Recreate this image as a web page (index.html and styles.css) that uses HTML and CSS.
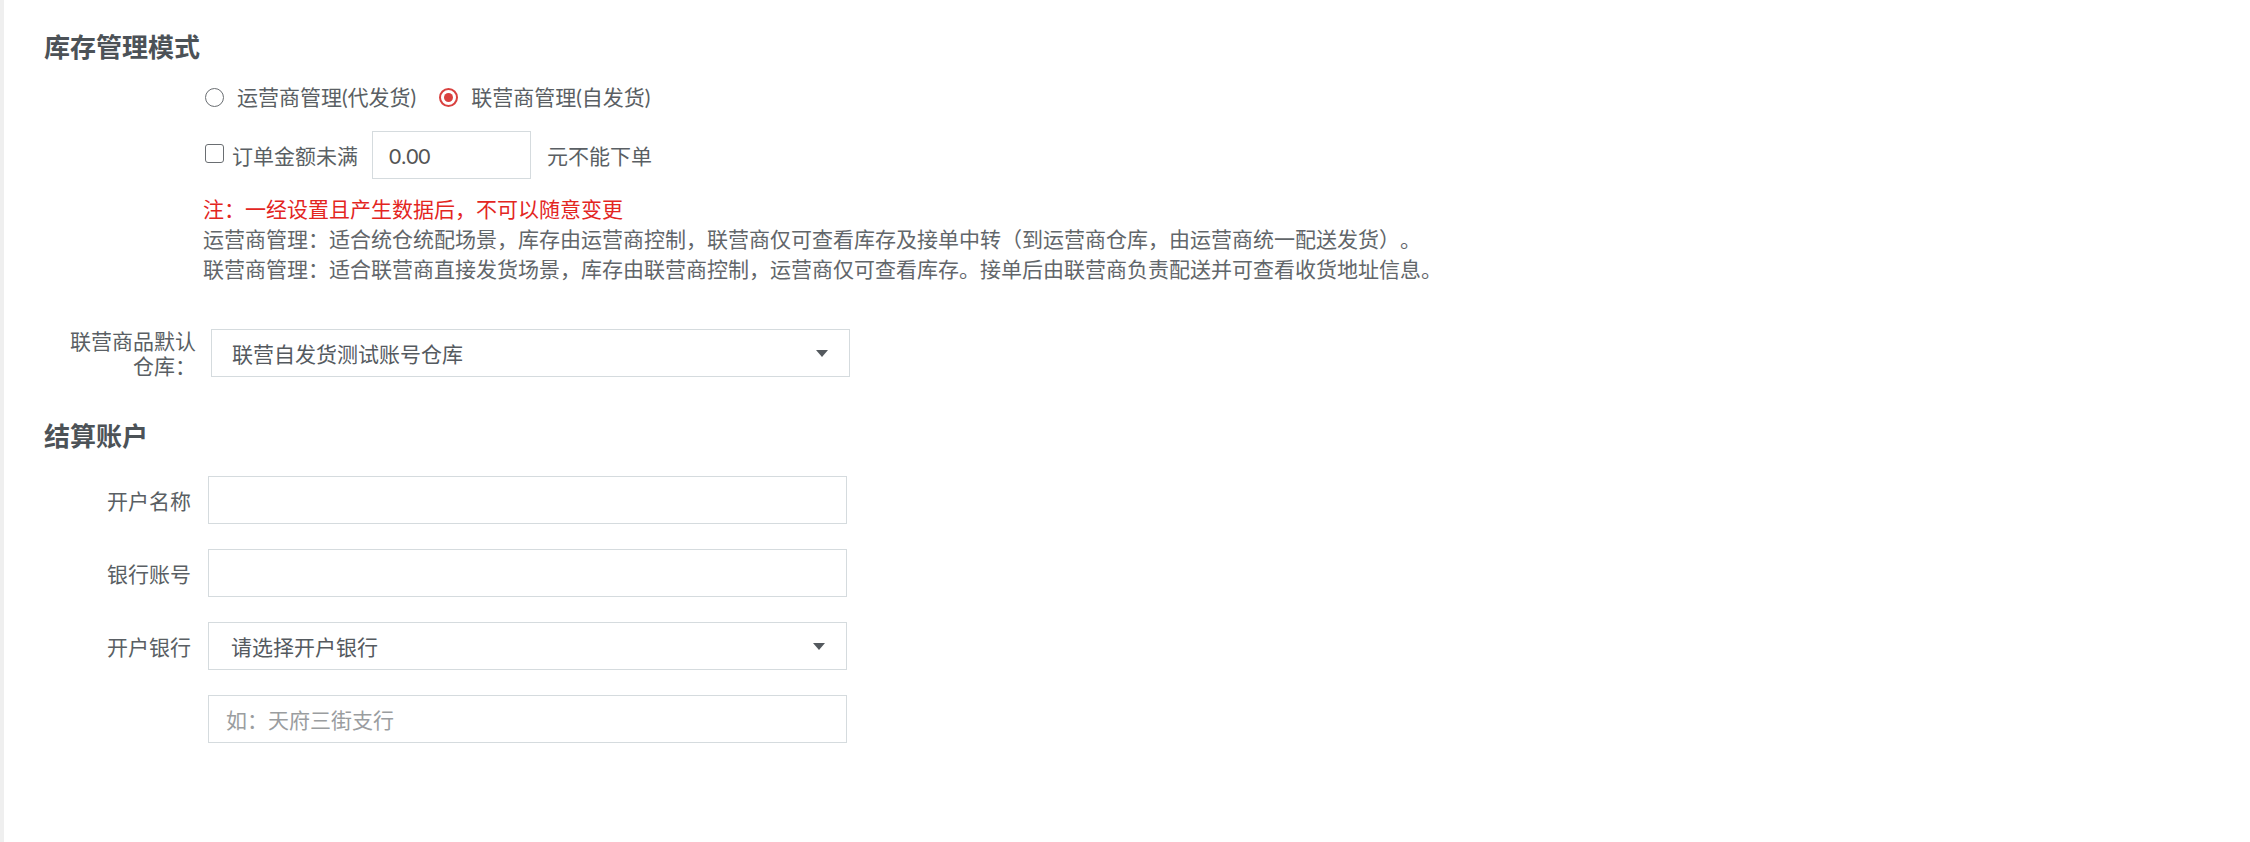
FILE: index.html
```html
<!DOCTYPE html>
<html lang="zh-CN">
  <head>
    <meta charset="UTF-8" />
    <meta name="viewport" content="width=device-width, initial-scale=1.0" />
    <title>库存管理模式</title>
    <link rel="stylesheet" href="styles.css">
  </head>
  <body>
    <div class="page">
      <h2 class="section-title">库存管理模式</h2>

      <div class="mode">
        <div class="radio-group">
          <label class="option"><span class="radio"></span>运营商管理(代发货)</label>
          <label class="option"><span class="radio checked"></span>联营商管理(自发货)</label>
        </div>

        <div class="min-order">
          <label class="option"><span class="checkbox"></span>订单金额未满</label>
          <input type="text" class="amount" value="0.00" />
          <span>元不能下单</span>
        </div>

        <div class="notes">
          <p class="warn">注：一经设置且产生数据后，不可以随意变更</p>
          <p>运营商管理：适合统仓统配场景，库存由运营商控制，联营商仅可查看库存及接单中转（到运营商仓库，由运营商统一配送发货）。</p>
          <p>联营商管理：适合联营商直接发货场景，库存由联营商控制，运营商仅可查看库存。接单后由联营商负责配送并可查看收货地址信息。</p>
        </div>
      </div>

      <div class="form-row warehouse">
        <label class="form-label">联营商品默认仓库：</label>
        <div class="select">联营自发货测试账号仓库<span class="caret"></span></div>
      </div>

      <h2 class="section-title account-title">结算账户</h2>

      <div class="account">
        <div class="form-row">
          <label class="form-label" for="acc-name">开户名称</label>
          <input type="text" class="field" id="acc-name" />
        </div>
        <div class="form-row">
          <label class="form-label" for="acc-no">银行账号</label>
          <input type="text" class="field" id="acc-no" />
        </div>
        <div class="form-row">
          <label class="form-label">开户银行</label>
          <div class="select">请选择开户银行<span class="caret"></span></div>
        </div>
        <div class="form-row">
          <span class="form-label"></span>
          <input type="text" class="field" placeholder="如：天府三街支行" />
        </div>
      </div>
    </div>
  </body>
</html>
```

FILE: styles.css
```css
body {
  margin: 0;
  font-family: Lato, "Noto Sans CJK SC", sans-serif;
  font-size: 21px;
  color: #5a5f64;
  background-color: #fff;
  text-spacing-trim: space-all;
}

.page {
  min-height: 842px;
  box-sizing: border-box;
  border-left: 4px solid #efefef;
  padding: 29px 0 0 40px;
}

.section-title {
  margin: 0;
  font-size: 26px;
  line-height: 36px;
  font-weight: bold;
  color: #4c5257;
}

/* inventory mode */
.mode {
  margin-left: 159px;
}

.option {
  display: inline-flex;
  align-items: center;
  gap: 13px;
}

.radio-group {
  display: flex;
  align-items: center;
  margin-top: 17px;
  line-height: 30px;
}

.radio-group .option + .option {
  margin-left: 21px;
}

.radio {
  width: 19px;
  height: 19px;
  margin-left: 2px;
  border: 1px solid #6a6e72;
  border-radius: 50%;
  box-sizing: border-box;
  display: flex;
  align-items: center;
  justify-content: center;
}

.radio.checked {
  border: 2px solid #d9413f;
}

.radio.checked::after {
  content: "";
  width: 9px;
  height: 9px;
  border-radius: 50%;
  background-color: #d9413f;
}

.min-order {
  display: flex;
  align-items: center;
  margin-top: 19px;
}

.min-order .option {
  gap: 8px;
}

.checkbox {
  width: 19px;
  height: 19px;
  margin-left: 2px;
  margin-top: -3px;
  border: 1px solid #6a6e72;
  border-radius: 3px;
  box-sizing: border-box;
}

.amount {
  width: 159px;
  height: 48px;
  margin: 0 16px 0 14px;
  padding: 0 16px;
  border: 1px solid #d5dbde;
  box-sizing: border-box;
  font: inherit;
  color: #555;
  outline: none;
}

.notes {
  margin-top: 15px;
  line-height: 30px;
  color: #62666a;
}

.notes p {
  margin: 0;
}

.notes .warn {
  color: #e3261f;
}

/* form rows */
.form-row {
  display: flex;
  align-items: center;
}

.form-label {
  width: 152px;
  padding-left: 20px;
  margin-right: 15px;
  box-sizing: border-box;
  text-align: right;
  line-height: 25px;
}

.warehouse {
  margin-top: 44px;
}

.select,
.field {
  width: 639px;
  height: 48px;
  border: 1px solid #d5dbde;
  box-sizing: border-box;
  background-color: #fff;
}

.select {
  display: flex;
  align-items: center;
  justify-content: space-between;
  padding: 0 21px 0 20px;
  color: #555a5f;
}

.caret {
  width: 0;
  height: 0;
  border-left: 6px solid transparent;
  border-right: 6px solid transparent;
  border-top: 7px solid #54595e;
}

.field {
  padding: 0 17px;
  font: inherit;
  color: #555;
  outline: none;
}

.field::placeholder {
  color: #9a9da0;
}

.account-title {
  margin-top: 40px;
}

.account .form-row {
  margin-top: 25px;
}

.account .form-row:first-child {
  margin-top: 22px;
}

.account .form-label {
  width: 147px;
  padding-left: 0;
  margin-right: 17px;
}

.account .select {
  padding-left: 22px;
}
```
